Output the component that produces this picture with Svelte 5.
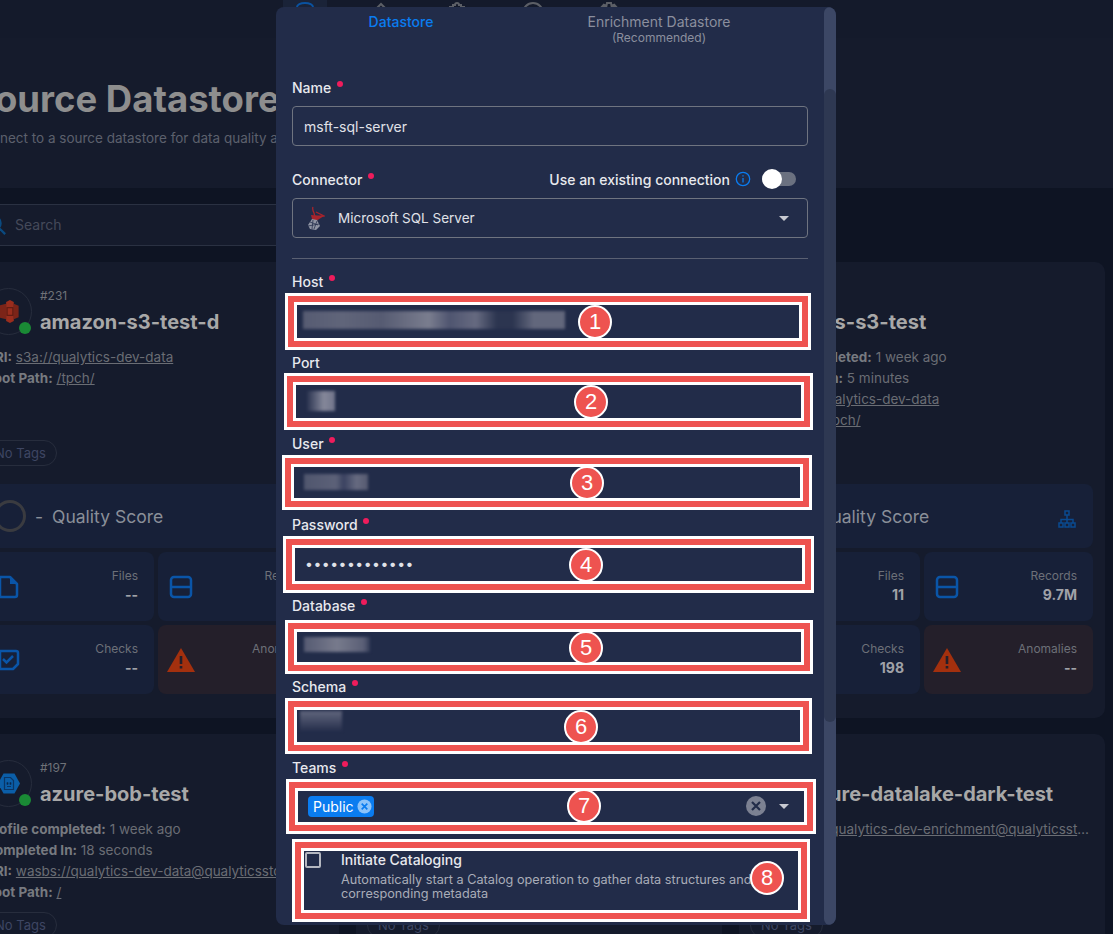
<script>
  const cards = [
    { id: '#231', name: 'amazon-s3-test-d', logo: 's3', meta: [['URI', 's3a://qualytics-dev-data', true], ['Root Path', '/tpch/', true]], files: '--', records: '--', checks: '--' },
    { id: '#212', name: 'athena-test', logo: 's3', meta: [], files: '--', records: '--', checks: '--' },
    { id: '#205', name: 'aws-s3-test', logo: 's3', meta: [['Profile completed', '1 week ago'], ['Completed In', '5 minutes'], ['URI', 's3a://qualytics-dev-data', true], ['Root Path', '/tpch/', true]], files: '11', records: '9.7M', checks: '198', tree: true },
    { id: '#197', name: 'azure-bob-test', logo: 'blob', meta: [['Profile completed', '1 week ago'], ['Completed In', '18 seconds'], ['URI', 'wasbs://qualytics-dev-data@qualyticsstorage.blob.core.windows.net', true], ['Root Path', '/', true]] },
    { id: '#195', name: 'azure-datalake', logo: 'blob', meta: [] },
    { id: '#190', name: 'azure-datalake-dark-test', logo: 'blob', meta: [['URI', 'abfss://qualytics-dev-enrichment@qualyticsstorage.dfs.core.windows.net', true]] }
  ]

  const fields = [
    { label: 'Host', required: true, blur: 'host' },
    { label: 'Port', blur: 'port' },
    { label: 'User', required: true, blur: 'user' },
    { label: 'Password', required: true, password: true },
    { label: 'Database', required: true, blur: 'database' },
    { label: 'Schema', required: true, blur: 'schema' }
  ]

  // annotation boxes drawn on top of the screenshot: x, y, w, h, then badge centre
  const marks = [
    [288, 296, 520, 51, 595, 322],
    [287, 376, 523, 51, 591, 402],
    [285, 458, 524, 49, 587, 483],
    [286, 539, 525, 51, 586, 565],
    [288, 623, 522, 48, 586, 648],
    [288, 701, 521, 50, 581, 727],
    [289, 782, 524, 49, 584, 806],
    [295, 842, 512, 77, 767, 878]
  ]
</script>

<div class="page">
  <div class="topbar">
    <nav>
      <span class="nav-item active">
        <svg viewBox="0 0 24 24"><ellipse cx="12" cy="6" rx="8" ry="4" /><path d="M4 6v12c0 2 4 4 8 4s8-2 8-4V6" /></svg>
      </span>
      <span class="nav-item"><svg viewBox="0 0 24 24"><path d="M3 12 12 3l9 9v9H3z" /></svg></span>
      <span class="nav-item"><svg viewBox="0 0 24 24"><path d="M8 4h2a2 2 0 0 1 4 0h2v2h3v16H5V6h3z" /></svg></span>
      <span class="nav-item"><svg viewBox="0 0 24 24"><circle cx="12" cy="12" r="10" /></svg></span>
      <span class="nav-item"><svg viewBox="0 0 24 24"><path d="M10 2h4l.6 3 2.6-1.200 2.600 2.800-1.600 2.400 3 1v4l-3 1 1.600 2.400-2.600 2.800-2.600-1.200-.6 3h-4l-.6-3-2.600 1.200-2.600-2.800 1.600-2.400-3-1v-4l3-1-1.600-2.400 2.600-2.800L9.400 5z" /></svg></span>
    </nav>
  </div>

  <header>
    <h1>Source Datastore</h1>
    <p>Connect to a source datastore for data quality analysis, monitoring and anomaly detection</p>
  </header>

  <div class="search">
    <svg class="search-icon" viewBox="0 0 24 24"><circle cx="10" cy="10" r="7" /><path d="m15 15 7 7" /></svg>
    <span>Search</span>
  </div>

  <div class="grid">
    {#each cards as card}
      <article class="card">
        <div class="head">
          <div class="avatar">
            {#if card.logo === 's3'}
              <svg viewBox="0 0 22 26" class="logo">
                <path fill="#7c2418" d="M0 7l8-2v16l-8-2z" />
                <path fill="#9a2d1d" d="M8 3l4-2 4 2v20l-4 2-4-2z" />
                <path fill="#7c2418" d="M16 5l5 2v12l-5 2z" />
                <rect x="9" y="9" width="6" height="8" fill="none" stroke="#5f1c12" stroke-width="1.200" />
              </svg>
            {:else}
              <svg viewBox="0 0 22 22" class="logo">
                <path fill="#0b5ea8" d="M5.500 1h11L22 11l-5.500 10h-11L0 11z" />
                <path fill="none" stroke="#0a3566" stroke-width="1.200" d="M6.500 5h6l3 3v9h-9z" />
                <path stroke="#0a3566" d="M9 10h1v2H9zM12 10h1v2h-1zM9 14h4" />
              </svg>
            {/if}
            <span class="status"></span>
          </div>
          <div>
            <div class="num">{card.id}</div>
            <div class="name">{card.name}</div>
          </div>
        </div>

        <div class="meta">
          {#each card.meta as [key, value, link]}
            <div class="line"><b>{key}:</b> {#if link}<u>{value}</u>{:else}{value}{/if}</div>
          {/each}
        </div>

        <span class="tag">No Tags</span>

        <div class="quality">
          <span class="ring"></span>
          <span class="dash">-</span>
          <span>Quality Score</span>
          {#if card.tree}
            <svg class="tree" viewBox="0 0 18 18"><path d="M7 1h4v4H7zM1 13h4v4H1zM7 13h4v4H7zM13 13h4v4h-4zM9 5v4M3 13v-3.500h12V13M9 9v4" /></svg>
          {/if}
        </div>

        <div class="tiles">
          <div class="tile">
            <svg class="tile-icon" viewBox="0 0 24 24"><path d="M4 2h10l7 7v11a2 2 0 0 1-2 2H4z" stroke-linejoin="round" /><path class="fold" d="M14 2l7 7h-7z" /></svg>
            <div class="stat"><span>Files</span><b>{card.files}</b></div>
          </div>
          <div class="tile">
            <svg class="tile-icon" viewBox="0 0 24 24"><rect x="2" y="2" width="20" height="20" rx="3" /><path d="M2 12h20" /></svg>
            <div class="stat"><span>Records</span><b>{card.records}</b></div>
          </div>
          <div class="tile">
            <svg class="tile-icon" viewBox="0 0 24 24"><path d="M4 3h16a2 2 0 0 1 2 2v11l-5 5H4z" stroke-linejoin="round" /><path d="m7 11 3.500 3.500L17 8" /></svg>
            <div class="stat"><span>Checks</span><b>{card.checks}</b></div>
          </div>
          <div class="tile warn">
            <svg class="warn-icon" viewBox="0 0 28 24"><path fill="#a3300e" d="M14 0l14 24H0z" /><path fill="#241f2a" d="M12.700 8h2.600v8h-2.600zM12.700 18h2.600v2.600h-2.600z" /></svg>
            <div class="stat"><span>Anomalies</span><b>--</b></div>
          </div>
        </div>
      </article>
    {/each}
  </div>

  <section class="modal">
    <div class="scrollbar"><div class="thumb"></div></div>
    <div class="tabs">
      <div class="tab on">Datastore</div>
      <div class="tab">Enrichment Datastore<small>(Recommended)</small></div>
    </div>

    <form>
      <div class="field">
        <label>Name <i></i></label>
        <input class="box" value="msft-sql-server" readonly />
      </div>

      <div class="field connector">
        <div class="label-row">
          <label>Connector <i></i></label>
          <div class="existing">
            <span>Use an existing connection</span>
            <svg class="info" viewBox="0 0 16 16"><circle cx="8" cy="8" r="6.700" /><path d="M8 7v4.500M8 4.200v1.300" /></svg>
            <span class="toggle"><span class="knob"></span></span>
          </div>
        </div>
        <div class="box select">
          <svg class="mssql" viewBox="0 0 18 24">
            <path d="M6 1c-1 2 0 4 1 6l1 4 9-1-8-4" fill="none" stroke="#a8242c" stroke-width="1.300" />
            <path d="M4 9l13 1-8 5-4-2z" fill="#a8242c" />
            <path d="M5 13l5 1 3 6-4 4-6-1-2-4z" fill="#8f94a3" />
            <path d="M3 16l8 3M6 14l-1 9M10 15l-3 8M1 20l11-2" stroke="#2a3350" stroke-width=".8" />
          </svg>
          <span class="select-text">Microsoft SQL Server</span>
          <span class="caret"></span>
        </div>
      </div>

      <hr />

      {#each fields as field}
        <div class="field tight">
          <label>{field.label} {#if field.required}<i></i>{/if}</label>
          {#if field.password}
            <input class="box dots" type="password" value="qualytics2024" readonly />
          {:else}
            <div class="box"><span class="redacted {field.blur}"></span></div>
          {/if}
        </div>
      {/each}

      <div class="field tight">
        <label>Teams <i></i></label>
        <div class="box select teams">
          <span class="chip">Public
            <svg viewBox="0 0 16 16"><circle cx="8" cy="8" r="7.500" fill="#8cc3fa" /><path d="m5 5 6 6M11 5l-6 6" stroke="#0a7cf0" stroke-width="1.800" /></svg>
          </span>
          <svg class="clear" viewBox="0 0 20 20"><circle cx="10" cy="10" r="10" fill="#7c8192" /><path d="m6 6 8 8M14 6l-8 8" stroke="#222c49" stroke-width="2.200" /></svg>
          <span class="caret"></span>
        </div>
      </div>

      <div class="catalog">
        <span class="check"></span>
        <div>
          <div class="catalog-title">Initiate Cataloging</div>
          <div class="catalog-text">Automatically start a Catalog operation to gather data structures and corresponding metadata</div>
        </div>
      </div>
    </form>
  </section>

  {#each marks as [x, y, w, h, cx, cy], i}
    <div class="mark" style="left:{x}px;top:{y}px;width:{w}px;height:{h}px"></div>
    <div class="badge" style="left:{cx}px;top:{cy}px">{i + 1}</div>
  {/each}
</div>

<style>
  :global(body) {
    margin: 0;
    background: #0e1423;
    overflow: hidden;
  }

  .page {
    position: relative;
    width: 1113px;
    height: 934px;
    overflow: hidden;
    background: #0e1423;
    font-family: Inter, 'Noto Sans', sans-serif;
    color: #8a8d94;
  }

  .topbar {
    height: 38px;
    background: #141a2b;
  }

  nav {
    display: flex;
    gap: 32px;
    padding-left: 283px;
  }

  .nav-item {
    display: flex;
    justify-content: center;
    width: 44px;
    height: 38px;
    padding-top: 1px;
    box-sizing: border-box;
  }

  .nav-item.active {
    background: #1a2338;
  }

  .nav-item svg {
    width: 24px;
    height: 24px;
    fill: none;
    stroke: #5c5f66;
    stroke-width: 2;
  }

  .nav-item.active svg {
    stroke: #0a52a0;
  }

  header {
    height: 150px;
    box-sizing: border-box;
    padding: 39px 0 0 0;
    background: #151b2c;
    margin-left: -29px;
  }

  h1 {
    margin: 0;
    font-size: 36.500px;
    line-height: 44px;
    font-weight: 700;
    color: #8e8e8e;
    white-space: nowrap;
  }

  header p {
    margin: 7px 0 0 3px;
    font-size: 13.500px;
    line-height: 20px;
    color: #5c606c;
    white-space: nowrap;
  }

  .search {
    display: flex;
    align-items: center;
    gap: 8px;
    width: 600px;
    height: 42px;
    box-sizing: border-box;
    margin: 16px 0 16px -15px;
    padding-bottom: 1px;
    background: #151b2c;
    border-top: 1px solid #2a3142;
    border-bottom: 1px solid #2a3142;
    font-size: 14px;
    color: #454a5a;
  }

  .search-icon {
    width: 22px;
    height: 22px;
    fill: none;
    stroke: #0a4a80;
    stroke-width: 2.500;
  }

  .grid {
    display: grid;
    grid-template-columns: repeat(3, 366px);
    gap: 16px 17px;
    margin-left: -27px;
  }

  .card {
    box-sizing: border-box;
    padding: 26px 12px 24px;
    background: #151b2c;
    border-radius: 10px;
    min-width: 0;
  }

  .head {
    display: flex;
    gap: 8px;
    height: 47px;
  }

  .avatar {
    position: relative;
    display: flex;
    align-items: center;
    justify-content: center;
    flex: none;
    width: 47px;
    height: 47px;
    box-sizing: border-box;
    border: 1px solid #272d3d;
    border-radius: 50%;
  }

  .logo {
    width: 22px;
    height: 25px;
  }

  .status {
    position: absolute;
    right: 0;
    bottom: 0;
    width: 12px;
    height: 12px;
    border-radius: 50%;
    background: #1a8a35;
  }

  .num {
    margin-top: 1px;
    font-size: 12px;
    line-height: 14px;
    color: #6f7278;
  }

  .name {
    margin-top: 6px;
    font-size: 20px;
    line-height: 26px;
    font-weight: 700;
    color: #a8a8a8;
    white-space: nowrap;
  }

  .meta {
    height: 84px;
    margin-top: 12px;
    margin-bottom: 9px;
    font-size: 13.500px;
    line-height: 21px;
    color: #6a6d74;
  }

  .line {
    white-space: nowrap;
    overflow: hidden;
    text-overflow: ellipsis;
  }

  .line b {
    color: #777a80;
    font-weight: 700;
  }

  .tag {
    display: block;
    width: fit-content;
    box-sizing: border-box;
    height: 26px;
    margin-left: -1px;
    padding: 0 10px;
    border: 1px solid #272d3d;
    border-radius: 13px;
    font-size: 13px;
    line-height: 24px;
    color: #3e4663;
  }

  .quality {
    display: flex;
    align-items: center;
    height: 64px;
    box-sizing: border-box;
    margin-top: 18px;
    padding: 0 17px 0 9px;
    background: #172038;
    border-radius: 8px;
    font-size: 17.500px;
    color: #8a8f98;
  }

  .ring {
    width: 32px;
    height: 32px;
    box-sizing: border-box;
    border: 3px solid #3a3b40;
    border-radius: 50%;
  }

  .dash {
    margin: 0 9px 0 9px;
  }

  .tree {
    width: 18px;
    height: 18px;
    margin-left: auto;
    margin-top: 6px;
    fill: none;
    stroke: #0a4a90;
    stroke-width: 1.500;
  }

  .tiles {
    display: grid;
    grid-template-columns: 169px 169px;
    grid-auto-rows: 69px;
    gap: 4px;
    margin-top: 4px;
  }

  .tile {
    display: flex;
    justify-content: space-between;
    box-sizing: border-box;
    padding: 0 16px 0 11px;
    background: #172038;
    border-radius: 8px;
  }

  .tile.warn {
    background: #241f2a;
    padding-left: 9px;
  }

  .tile-icon {
    width: 24px;
    height: 24px;
    margin-top: 23px;
    fill: none;
    stroke: #0a55a8;
    stroke-width: 2.500;
  }

  .fold {
    fill: #0a55a8;
    stroke: none;
  }

  .warn-icon {
    width: 28px;
    height: 24px;
    margin-top: 23px;
  }

  .stat {
    display: flex;
    flex-direction: column;
    align-items: flex-end;
    padding-top: 15px;
    font-size: 12px;
    line-height: 18px;
    color: #6d7078;
  }

  .stat b {
    font-size: 14px;
    line-height: 20px;
    color: #a0a2a8;
  }

  .modal {
    position: absolute;
    left: 276px;
    top: 7px;
    width: 560px;
    height: 918px;
    overflow: hidden;
    background: #222c49;
    border-radius: 8px;
  }

  .scrollbar {
    position: absolute;
    right: 0;
    top: 0;
    bottom: 0;
    width: 12px;
    background: #3c4765;
    border-radius: 6px;
  }

  .thumb {
    margin-top: 82px;
    height: 633px;
    background: #2e3852;
    border-radius: 6px;
  }

  .tabs {
    display: grid;
    grid-template-columns: 250px 266px;
    padding: 7px 0 0;
    height: 65px;
    box-sizing: border-box;
    text-align: center;
    font-size: 14px;
    line-height: 16px;
    color: #8b8f9e;
  }

  .tab.on {
    color: #0a7cf0;
    font-weight: 500;
  }

  .tab small {
    display: block;
    font-size: 12px;
    line-height: 16px;
  }

  form {
    display: flex;
    flex-direction: column;
    width: 516px;
    margin-left: 16px;
    padding-top: 6px;
  }

  .field {
    display: flex;
    flex-direction: column;
    gap: 8px;
  }

  .connector {
    margin-top: 24px;
  }

  .tight + .tight {
    margin-top: 13px;
  }

  label {
    font-size: 14px;
    line-height: 20px;
    font-weight: 500;
    color: #e8e9ee;
  }

  label i {
    display: inline-block;
    width: 6px;
    height: 6px;
    margin-left: 2px;
    vertical-align: 6px;
    border-radius: 50%;
    background: #ef1c5c;
  }

  .box {
    display: flex;
    align-items: center;
    box-sizing: border-box;
    width: 100%;
    height: 40px;
    padding: 0 11px;
    margin: 0;
    border: 1px solid #6f7480;
    border-radius: 4px;
    background: transparent;
    font-family: inherit;
    font-size: 14px;
    font-weight: 400;
    color: #e0e2e8;
    outline: none;
  }

  .dots {
    letter-spacing: 0.500px;
    padding-left: 12px;
  }

  .label-row {
    display: flex;
    justify-content: space-between;
    align-items: center;
    height: 20px;
  }

  .existing {
    display: flex;
    align-items: center;
    font-size: 14px;
    font-weight: 500;
    color: #e8e9ee;
    margin-top: -2px;
    padding-right: 12px;
  }

  .info {
    width: 16px;
    height: 16px;
    margin: 0 11px 0 5px;
    fill: none;
    stroke: #0a7cf0;
    stroke-width: 1.300;
  }

  .toggle {
    position: relative;
    width: 34px;
    height: 14px;
    border-radius: 7px;
    background: #6b7180;
  }

  .knob {
    position: absolute;
    left: 0;
    top: -3px;
    width: 20px;
    height: 20px;
    border-radius: 50%;
    background: #fff;
  }

  .select {
    gap: 13px;
    padding: 0 18px 0 14px;
  }

  .select-text {
    font-size: 13.500px;
    margin-top: -1px;
  }

  .mssql {
    width: 18px;
    height: 24px;
    flex: none;
  }

  .caret {
    width: 0;
    height: 0;
    margin-left: auto;
    border-left: 5px solid transparent;
    border-right: 5px solid transparent;
    border-top: 5px solid #c8cad2;
  }

  hr {
    width: 100%;
    height: 1px;
    margin: 20px 0 13px;
    border: 0;
    background: #5a6072;
  }

  .redacted {
    display: block;
    filter: blur(1.500px);
  }

  .host {
    width: 262px;
    height: 18px;
    margin-left: -1px;
    background: linear-gradient(90deg, #565b72, #60657a 15%, #565b72 30%, #7a7d8e 48%, #4f5570 56%, #666a80 66%, #2c3550 74%, #2c3550 80%, #62677c 88%, #62677c);
  }

  .port {
    width: 28px;
    height: 20px;
    margin-left: 3px;
    background: linear-gradient(90deg, #2a3350, #85889a 60%, #70748a);
  }

  .user {
    width: 64px;
    height: 16px;
    background: linear-gradient(90deg, #50566e, #5c6178 50%, #3a4260 62%, #666a80 82%, #555a70);
  }

  .database {
    width: 66px;
    height: 15px;
    background: linear-gradient(90deg, #555a72, #777a8c 50%, #5a5f76 90%, #333c58);
  }

  .schema {
    width: 42px;
    height: 20px;
    margin-left: -4px;
    margin-top: -8px;
    background: linear-gradient(180deg, #60657c, #262f4c);
  }

  .teams {
    padding-left: 15px;
  }

  .chip {
    display: inline-flex;
    align-items: center;
    gap: 3px;
    height: 21px;
    padding: 0 2px 0 5px;
    border-radius: 4px;
    background: #0a7cf0;
    font-size: 14px;
    font-weight: 400;
    color: #fff;
  }

  .chip svg {
    width: 15px;
    height: 15px;
  }

  .clear {
    width: 20px;
    height: 20px;
    margin-left: auto;
  }

  .teams .caret {
    margin-left: 0;
  }

  .catalog {
    display: flex;
    gap: 20px;
    margin-top: 26px;
    padding-left: 13px;
    padding-right: 40px;
  }

  .check {
    flex: none;
    width: 16px;
    height: 16px;
    box-sizing: border-box;
    border: 2px solid #b4b7c0;
    border-radius: 2px;
  }

  .catalog-title {
    font-size: 14px;
    line-height: 16px;
    font-weight: 500;
    color: #e8e9ee;
  }

  .catalog-text {
    margin-top: 5px;
    font-size: 12.700px;
    line-height: 14px;
    color: #a9acb8;
  }

  .mark {
    position: absolute;
    box-sizing: border-box;
    border: 6px solid #ee5350;
    box-shadow: 0 0 0 3px #fff, inset 0 0 0 3px #fff;
  }

  .badge {
    position: absolute;
    display: flex;
    align-items: center;
    justify-content: center;
    width: 34px;
    height: 34px;
    margin: -17px 0 0 -17px;
    box-sizing: border-box;
    border: 2px solid #fff;
    border-radius: 50%;
    background: #ee5350;
    font-family: 'Liberation Sans', sans-serif;
    font-size: 22px;
    color: #fff;
  }
</style>
